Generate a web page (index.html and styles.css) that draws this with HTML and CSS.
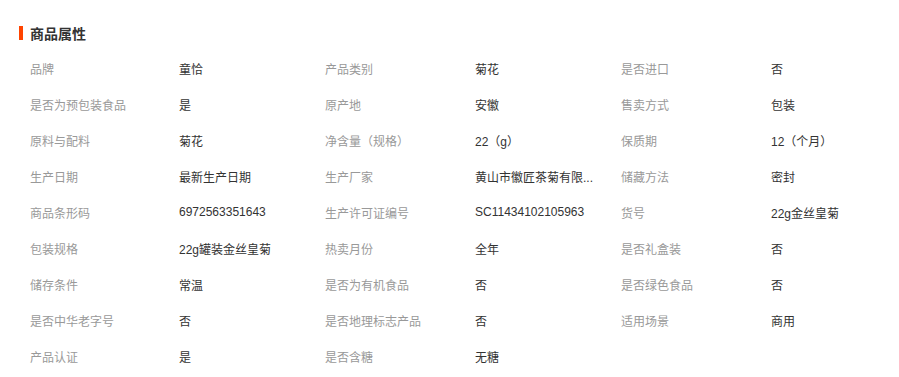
FILE: index.html
```html
<!DOCTYPE html>
<html lang="zh-CN">
<head>
<meta charset="utf-8">
<title>商品属性</title>
<link rel="stylesheet" href="styles.css">
</head>
<body>
<section class="attrs">
  <h2 class="attrs-title">商品属性</h2>
  <div class="attrs-grid">
    <div class="k">品牌</div><div class="v">童恰</div>
    <div class="k">产品类别</div><div class="v">菊花</div>
    <div class="k">是否进口</div><div class="v">否</div>

    <div class="k">是否为预包装食品</div><div class="v">是</div>
    <div class="k">原产地</div><div class="v">安徽</div>
    <div class="k">售卖方式</div><div class="v">包装</div>

    <div class="k">原料与配料</div><div class="v">菊花</div>
    <div class="k">净含量（规格）</div><div class="v">22（g）</div>
    <div class="k">保质期</div><div class="v">12（个月）</div>

    <div class="k">生产日期</div><div class="v">最新生产日期</div>
    <div class="k">生产厂家</div><div class="v" title="黄山市徽匠茶菊有限公司">黄山市徽匠茶菊有限...</div>
    <div class="k">储藏方法</div><div class="v">密封</div>

    <div class="k">商品条形码</div><div class="v">6972563351643</div>
    <div class="k">生产许可证编号</div><div class="v">SC11434102105963</div>
    <div class="k">货号</div><div class="v">22g金丝皇菊</div>

    <div class="k">包装规格</div><div class="v">22g罐装金丝皇菊</div>
    <div class="k">热卖月份</div><div class="v">全年</div>
    <div class="k">是否礼盒装</div><div class="v">否</div>

    <div class="k">储存条件</div><div class="v">常温</div>
    <div class="k">是否为有机食品</div><div class="v">否</div>
    <div class="k">是否绿色食品</div><div class="v">否</div>

    <div class="k">是否中华老字号</div><div class="v">否</div>
    <div class="k">是否地理标志产品</div><div class="v">否</div>
    <div class="k">适用场景</div><div class="v">商用</div>

    <div class="k">产品认证</div><div class="v">是</div>
    <div class="k">是否含糖</div><div class="v">无糖</div>
  </div>
</section>
</body>
</html>
```

FILE: styles.css
```css
html, body {
  margin: 0;
  padding: 0;
  background: #fff;
}

body {
  font-family: "Liberation Sans", "Noto Sans CJK SC", sans-serif;
  font-size: 12px;
  color: #333;
}

.attrs {
  padding-top: 20px;
}

.attrs-title {
  margin: 0 0 4px 19px;
  height: 26px;
  display: flex;
  align-items: center;
  font-size: 14px;
  font-weight: bold;
  color: #333;
}

.attrs-title::before {
  content: "";
  width: 4px;
  height: 14px;
  background: #ff4400;
  margin-right: 7px;
}

.attrs-grid {
  margin-left: 30px;
  display: grid;
  grid-template-columns: 149px 146px 150px 146px 150px 1fr;
  grid-auto-rows: 36px;
  align-items: center;
}

.k {
  color: #999;
  white-space: nowrap;
}

.v {
  color: #333;
  white-space: nowrap;
}
```
